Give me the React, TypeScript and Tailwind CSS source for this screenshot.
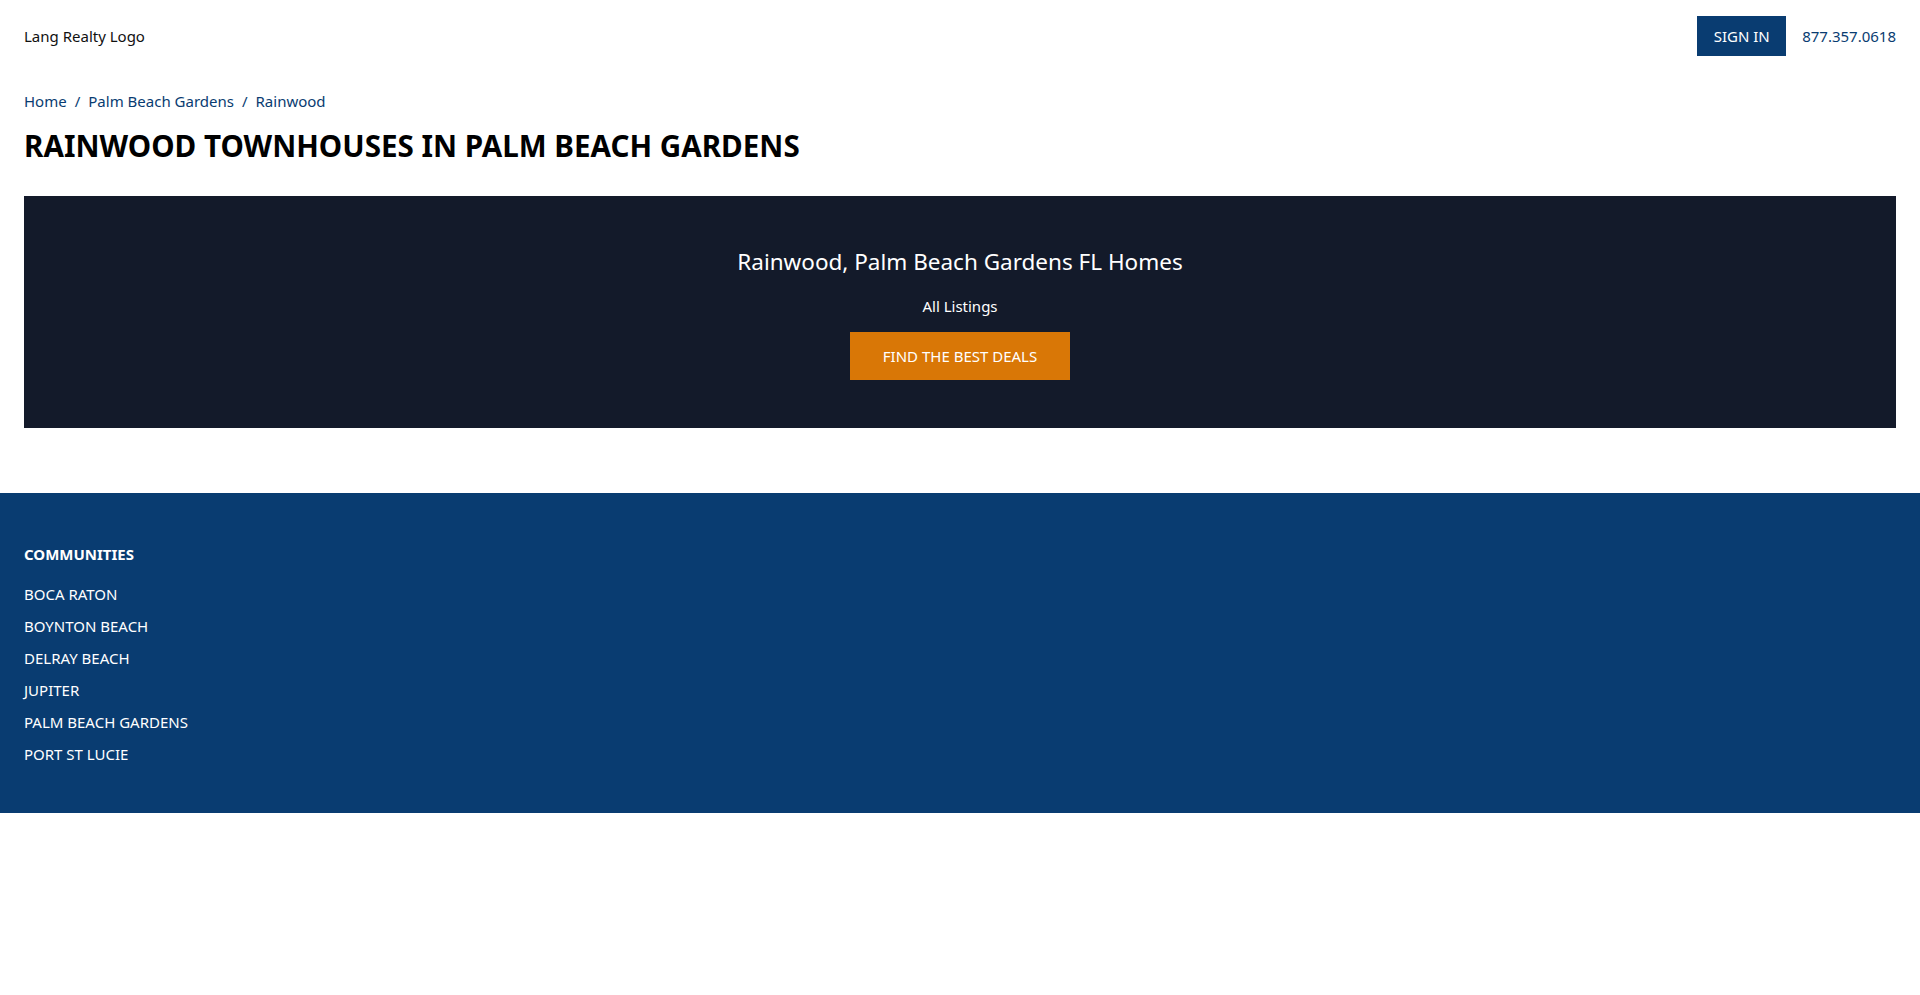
import React from "react";

const communities = [
  "BOCA RATON",
  "BOYNTON BEACH",
  "DELRAY BEACH",
  "JUPITER",
  "PALM BEACH GARDENS",
  "PORT ST LUCIE",
];

export default function App() {
  return (
    <div
      className="min-h-[995px] bg-white text-black"
      style={{ fontFamily: '"Segoe UI", "Noto Sans", "Open Sans", sans-serif' }}
    >
      <header className="flex items-center justify-between px-6 py-4">
        <div className="text-[15px] leading-6 text-[#111]">Lang Realty Logo</div>
        <div className="flex items-center gap-4">
          <button className="h-10 w-[89px] bg-[#093c71] text-[15px] text-white">
            SIGN IN
          </button>
          <a className="pt-px text-[15px] text-[#093c71]">877.357.0618</a>
        </div>
      </header>

      <main className="px-6">
        <nav className="mt-[17px] flex items-center gap-2 text-[15px] leading-6 text-[#093c71]">
          <a>Home</a>
          <span className="text-[#093c71]">/</span>
          <a>Palm Beach Gardens</a>
          <span className="text-[#093c71]">/</span>
          <a>Rainwood</a>
        </nav>
        <h1 className="mt-[15px] text-[29.6px] font-bold leading-9 text-black">
          RAINWOOD TOWNHOUSES IN PALM BEACH GARDENS
        </h1>

        <section className="mt-8 flex flex-col items-center bg-[#131a2a] py-12 text-white">
          <h2 className="text-[22.5px] leading-9">Rainwood, Palm Beach Gardens FL Homes</h2>
          <p className="mt-[14px] text-[15px] leading-6">All Listings</p>
          <button className="mt-[14px] h-12 w-[220px] bg-[#d97706] pt-px text-[15px] text-white">
            FIND THE BEST DEALS
          </button>
        </section>
      </main>

      <footer className="mt-[65px] bg-[#093c71] px-6 pb-[47px] pt-[49px] text-white">
        <h3 className="text-[15px] font-bold leading-6">COMMUNITIES</h3>
        <ul className="mt-4 flex flex-col gap-2">
          {communities.map((c) => (
            <li key={c} className="text-[15px] leading-6">
              {c}
            </li>
          ))}
        </ul>
      </footer>
    </div>
  );
}
